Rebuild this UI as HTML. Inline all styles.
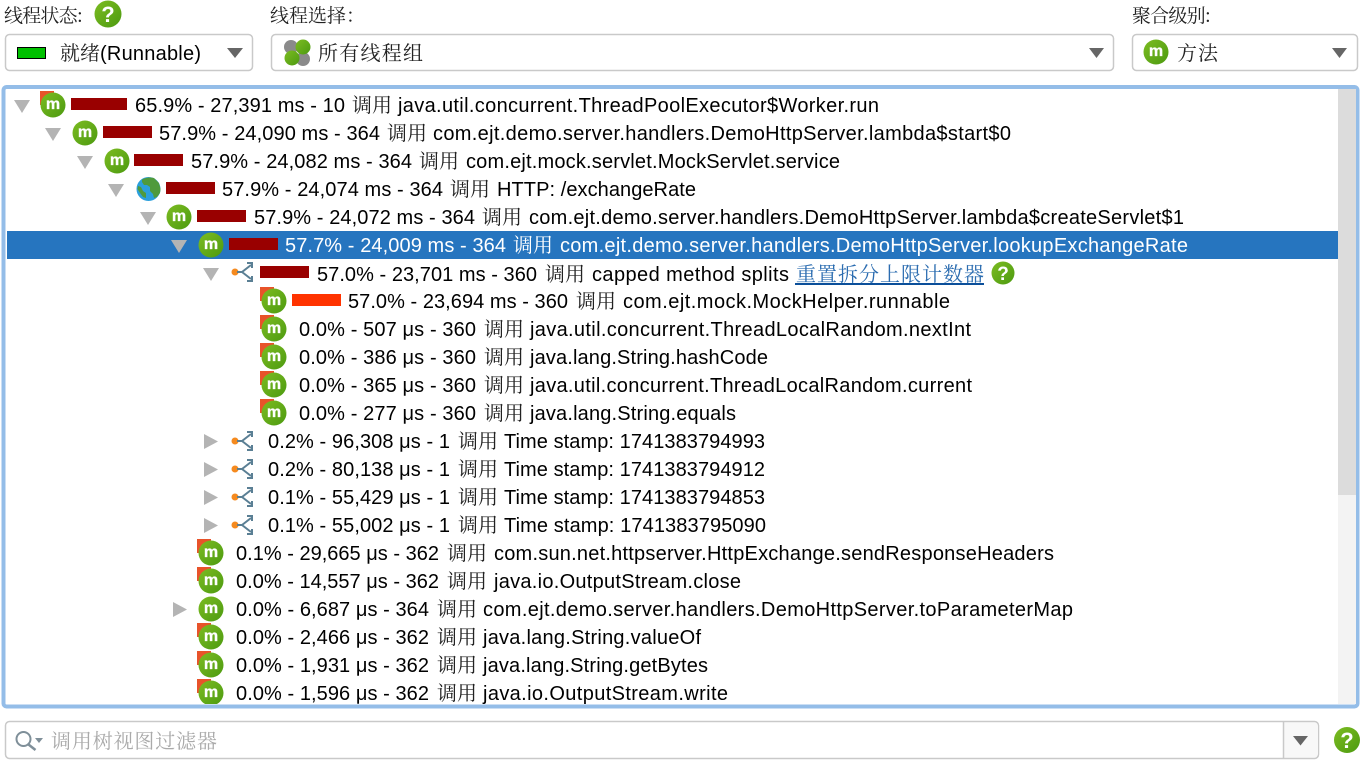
<!DOCTYPE html>
<html lang="zh"><head><meta charset="utf-8"><title>调用树</title>
<style>
html,body{margin:0;padding:0;background:#fff;width:1360px;height:763px;overflow:hidden}
svg{display:block;font-family:"Liberation Sans","Noto Serif CJK SC",sans-serif;font-size:20px}
text{fill:#000}
.c{font-family:"Noto Serif CJK SC","Liberation Serif",serif;fill:#222}
.l{font-size:19px}
.w{fill:#fff}
.m{font-family:"Liberation Sans",sans-serif;font-weight:bold;font-size:16px;fill:#fff;stroke:#fff;stroke-width:.3;text-anchor:middle;transform:translateY(-2px)}
.q{font-family:"Liberation Sans",sans-serif;font-weight:bold;fill:#fff;text-anchor:middle}
.g{fill:url(#gr)}
.f{fill:#e8532a}
.b{fill:#990000}
.a{fill:#b4b4b4}
.s{fill:none;stroke:#5a7f94;stroke-width:2}
.o{fill:#f58a1f}
.d{fill:#666}
.bx{fill:#fff;stroke:#c9c9c9;stroke-width:1.5}
</style></head><body>
<svg width="1360" height="763" viewBox="0 0 1360 763" xmlns="http://www.w3.org/2000/svg">
<defs>
<linearGradient id="gr" x1="0" y1="0" x2="1" y2="1"><stop offset="0" stop-color="#7cbc22"/><stop offset="1" stop-color="#4c9a10"/></linearGradient>
<clipPath id="tc"><rect x="7" y="89" width="1331" height="615"/></clipPath>
</defs>

<text class="c l" x="4" y="22" textLength="79">线程状态:</text>
<circle class="g" cx="108" cy="14" r="13.5"/><text class="q" x="108" y="22" font-size="22">?</text>
<text class="c l" x="270" y="22">线程选择：</text>
<text class="c l" x="1132" y="22" textLength="79">聚合级别:</text>

<rect class="bx" x="5.5" y="34.5" width="247" height="36" rx="4"/>
<rect x="17.5" y="47.5" width="28" height="11" fill="#00c000" stroke="#000"/>
<text class="c" x="60" y="60" textLength="40">就绪</text>
<text x="100" y="60" textLength="101">(Runnable)</text>
<path class="d" d="M227 48h16l-8 10z"/>

<rect class="bx" x="271.5" y="34.5" width="842" height="36" rx="4"/>
<circle cx="291" cy="47" r="7" fill="#8a8a8a"/><circle cx="303" cy="59" r="7" fill="#8a8a8a"/>
<circle class="g" cx="303" cy="47" r="7.500"/><circle class="g" cx="292" cy="58" r="7.500"/>
<text class="c" x="318" y="60" textLength="105">所有线程组</text>
<path class="d" d="M1089 48h15l-7.500 10z"/>

<rect class="bx" x="1132.500" y="34.500" width="225" height="36" rx="4"/>
<circle class="g" cx="1156" cy="52" r="12.500"/><text class="m" x="1156" y="58">m</text>
<text class="c" x="1177" y="60" textLength="41">方法</text>
<path class="d" d="M1332 48h15l-7.500 10z"/>

<rect x="3.500" y="87" width="1354" height="619.500" rx="3" fill="#fff" stroke="#94bde8" stroke-width="4"/>
<rect x="1338" y="89" width="18" height="615" fill="#f3f3f3"/>
<rect x="1338" y="89" width="18" height="406" fill="#dcdcdc"/>

<g clip-path="url(#tc)">
<rect x="7" y="231" width="1331" height="28" fill="#2675bf"/>

<path class="a" d="M14 100h16l-8 13z"/>
<rect class="f" x="40" y="91" width="14" height="14"/><circle class="g" cx="53" cy="105" r="12.500"/><text class="m" x="53" y="111">m</text>
<rect class="b" x="71" y="98" width="56" height="12"/>
<text x="135" y="112" textLength="210">65.9% - 27,391 ms - 10</text><text class="c" x="352" y="112">调用</text><text x="398" y="112" textLength="481">java.util.concurrent.ThreadPoolExecutor$Worker.run</text>

<path class="a" d="M45 128h16l-8 13z"/>
<circle class="g" cx="85" cy="133" r="12.500"/><text class="m" x="85" y="139">m</text>
<rect class="b" x="103" y="126" width="49" height="12"/>
<text x="159" y="140" textLength="221">57.9% - 24,090 ms - 364</text><text class="c" x="387" y="140">调用</text><text x="433" y="140" textLength="578">com.ejt.demo.server.handlers.DemoHttpServer.lambda$start$0</text>

<path class="a" d="M77 156h16l-8 13z"/>
<circle class="g" cx="117" cy="161" r="12.500"/><text class="m" x="117" y="167">m</text>
<rect class="b" x="134" y="154" width="49" height="12"/>
<text x="191" y="168" textLength="221">57.9% - 24,082 ms - 364</text><text class="c" x="419" y="168">调用</text><text x="466" y="168" textLength="374">com.ejt.mock.servlet.MockServlet.service</text>

<path class="a" d="M108 184h16l-8 13z"/>
<circle cx="148.500" cy="189" r="12" fill="#2b9fdc"/>
<path d="M142 179.500q6-3 12-1.500l5 5 1.500 6-.5 4-3 4-3 1-1-4-3-3 0-4-3-2-3 0-2-3zM138 186l3 1 2 4 3 2 0 5-3-1-3-4-2.500-4z" fill="#4f9a3c"/>
<rect class="b" x="166" y="182" width="49" height="12"/>
<text x="222" y="196" textLength="221">57.9% - 24,074 ms - 364</text><text class="c" x="450" y="196">调用</text><text x="497" y="196" textLength="199">HTTP: /exchangeRate</text>

<path class="a" d="M140 212h16l-8 13z"/>
<circle class="g" cx="179" cy="217" r="12.500"/><text class="m" x="179" y="223">m</text>
<rect class="b" x="197" y="210" width="49" height="12"/>
<text x="254" y="224" textLength="221">57.9% - 24,072 ms - 364</text><text class="c" x="482" y="224">调用</text><text x="529" y="224" textLength="655">com.ejt.demo.server.handlers.DemoHttpServer.lambda$createServlet$1</text>

<path class="a" d="M171 240h16l-8 13z"/>
<circle class="g" cx="211" cy="245" r="12.500"/><text class="m" x="211" y="251">m</text>
<rect class="b" x="229" y="238" width="49" height="12"/>
<text class="w" x="285" y="252" textLength="221">57.7% - 24,009 ms - 364</text><text class="c w" x="513" y="252">调用</text><text class="w" x="560" y="252" textLength="628">com.ejt.demo.server.handlers.DemoHttpServer.lookupExchangeRate</text>

<path class="a" d="M203 268h16l-8 13z"/>
<circle class="o" cx="235" cy="272" r="3.500"/><path class="s" d="M237 272h5l9-7M242 272l9 7M247 263h5v5M247 281h5v-5"/>
<rect class="b" x="260" y="266" width="49" height="12"/>
<text x="317" y="281" textLength="220">57.0% - 23,701 ms - 360</text><text class="c" x="545" y="281">调用</text><text x="592" y="281" textLength="197">capped method splits</text>
<text class="c" x="796" y="281" textLength="188" style="fill:#2b6cb0">重置拆分上限计数器</text>
<rect x="795" y="283" width="189" height="2" fill="#0b4f9a"/>
<circle class="g" cx="1003" cy="273" r="11.500"/><text class="q" x="1003" y="280" font-size="19">?</text>

<rect class="f" x="260" y="287" width="14" height="14"/><circle class="g" cx="274" cy="301" r="12.500"/><text class="m" x="274" y="307">m</text>
<rect x="292" y="294" width="49" height="12" fill="#ff3300"/>
<text x="348" y="308" textLength="220">57.0% - 23,694 ms - 360</text><text class="c" x="576" y="308">调用</text><text x="623" y="308" textLength="327">com.ejt.mock.MockHelper.runnable</text>

<rect class="f" x="260" y="315" width="14" height="14"/><circle class="g" cx="274" cy="329" r="12.500"/><text class="m" x="274" y="335">m</text>
<text x="299" y="336" textLength="177">0.0% - 507 μs - 360</text><text class="c" x="484" y="336">调用</text><text x="530" y="336" textLength="441">java.util.concurrent.ThreadLocalRandom.nextInt</text>

<rect class="f" x="260" y="343" width="14" height="14"/><circle class="g" cx="274" cy="357" r="12.500"/><text class="m" x="274" y="363">m</text>
<text x="299" y="364" textLength="177">0.0% - 386 μs - 360</text><text class="c" x="484" y="364">调用</text><text x="530" y="364" textLength="238">java.lang.String.hashCode</text>

<rect class="f" x="260" y="371" width="14" height="14"/><circle class="g" cx="274" cy="385" r="12.500"/><text class="m" x="274" y="391">m</text>
<text x="299" y="392" textLength="177">0.0% - 365 μs - 360</text><text class="c" x="484" y="392">调用</text><text x="530" y="392" textLength="442">java.util.concurrent.ThreadLocalRandom.current</text>

<rect class="f" x="260" y="399" width="14" height="14"/><circle class="g" cx="274" cy="413" r="12.500"/><text class="m" x="274" y="419">m</text>
<text x="299" y="420" textLength="177">0.0% - 277 μs - 360</text><text class="c" x="484" y="420">调用</text><text x="530" y="420" textLength="206">java.lang.String.equals</text>

<path class="a" d="M204 434l14 7.500-14 7.500z"/>
<circle class="o" cx="235" cy="441" r="3.500"/><path class="s" d="M237 441h5l9-7M242 441l9 7M247 432h5v5M247 450h5v-5"/>
<text x="268" y="448" textLength="182">0.2% - 96,308 μs - 1</text><text class="c" x="458" y="448">调用</text><text x="504" y="448" textLength="261">Time stamp: 1741383794993</text>

<path class="a" d="M204 462l14 7.500-14 7.500z"/>
<circle class="o" cx="235" cy="469" r="3.500"/><path class="s" d="M237 469h5l9-7M242 469l9 7M247 460h5v5M247 478h5v-5"/>
<text x="268" y="476" textLength="182">0.2% - 80,138 μs - 1</text><text class="c" x="458" y="476">调用</text><text x="504" y="476" textLength="261">Time stamp: 1741383794912</text>

<path class="a" d="M204 490l14 7.500-14 7.500z"/>
<circle class="o" cx="235" cy="497" r="3.500"/><path class="s" d="M237 497h5l9-7M242 497l9 7M247 488h5v5M247 506h5v-5"/>
<text x="268" y="504" textLength="182">0.1% - 55,429 μs - 1</text><text class="c" x="458" y="504">调用</text><text x="504" y="504" textLength="261">Time stamp: 1741383794853</text>

<path class="a" d="M204 518l14 7.500-14 7.500z"/>
<circle class="o" cx="235" cy="525" r="3.500"/><path class="s" d="M237 525h5l9-7M242 525l9 7M247 516h5v5M247 534h5v-5"/>
<text x="268" y="532" textLength="182">0.1% - 55,002 μs - 1</text><text class="c" x="458" y="532">调用</text><text x="504" y="532" textLength="262">Time stamp: 1741383795090</text>

<rect class="f" x="197" y="539" width="14" height="14"/><circle class="g" cx="211" cy="553" r="12.500"/><text class="m" x="211" y="559">m</text>
<text x="236" y="560" textLength="203">0.1% - 29,665 μs - 362</text><text class="c" x="447" y="560">调用</text><text x="494" y="560" textLength="560">com.sun.net.httpserver.HttpExchange.sendResponseHeaders</text>

<rect class="f" x="197" y="567" width="14" height="14"/><circle class="g" cx="211" cy="581" r="12.500"/><text class="m" x="211" y="587">m</text>
<text x="236" y="588" textLength="203">0.0% - 14,557 μs - 362</text><text class="c" x="447" y="588">调用</text><text x="494" y="588" textLength="247">java.io.OutputStream.close</text>

<path class="a" d="M173 602l14 7.500-14 7.500z"/>
<circle class="g" cx="211" cy="609" r="12.500"/><text class="m" x="211" y="615">m</text>
<text x="236" y="616" textLength="193">0.0% - 6,687 μs - 364</text><text class="c" x="437" y="616">调用</text><text x="483" y="616" textLength="590">com.ejt.demo.server.handlers.DemoHttpServer.toParameterMap</text>

<rect class="f" x="197" y="623" width="14" height="14"/><circle class="g" cx="211" cy="637" r="12.500"/><text class="m" x="211" y="643">m</text>
<text x="236" y="644" textLength="193">0.0% - 2,466 μs - 362</text><text class="c" x="437" y="644">调用</text><text x="483" y="644" textLength="218">java.lang.String.valueOf</text>

<rect class="f" x="197" y="651" width="14" height="14"/><circle class="g" cx="211" cy="665" r="12.500"/><text class="m" x="211" y="671">m</text>
<text x="236" y="672" textLength="193">0.0% - 1,931 μs - 362</text><text class="c" x="437" y="672">调用</text><text x="483" y="672" textLength="225">java.lang.String.getBytes</text>

<rect class="f" x="197" y="679" width="14" height="14"/><circle class="g" cx="211" cy="693" r="12.500"/><text class="m" x="211" y="699">m</text>
<text x="236" y="700" textLength="193">0.0% - 1,596 μs - 362</text><text class="c" x="437" y="700">调用</text><text x="483" y="700" textLength="245">java.io.OutputStream.write</text>
</g>

<rect class="bx" x="5.500" y="721.500" width="1313" height="37" rx="4"/>
<path d="M1284 722.500h30a4 4 0 0 1 4 4v27a4 4 0 0 1-4 4h-30z" fill="#f8f8f8"/>
<path d="M1283.500 722v36" stroke="#c9c9c9" stroke-width="1.500"/>
<path class="d" d="M1293 736h15l-7.500 9.500z"/>
<circle cx="23.500" cy="739" r="7" fill="none" stroke="#7f8f99" stroke-width="2"/>
<path d="M28.500 744.500l7 5.500" stroke="#7f8f99" stroke-width="2.500"/>
<path d="M35 738h8l-4 5z" fill="#7f8f99"/>
<text class="c" x="51" y="748" textLength="166" style="fill:#aaa">调用树视图过滤器</text>
<circle class="g" cx="1347" cy="740" r="13"/><text class="q" x="1347" y="748" font-size="22">?</text>
</svg>
</body></html>
